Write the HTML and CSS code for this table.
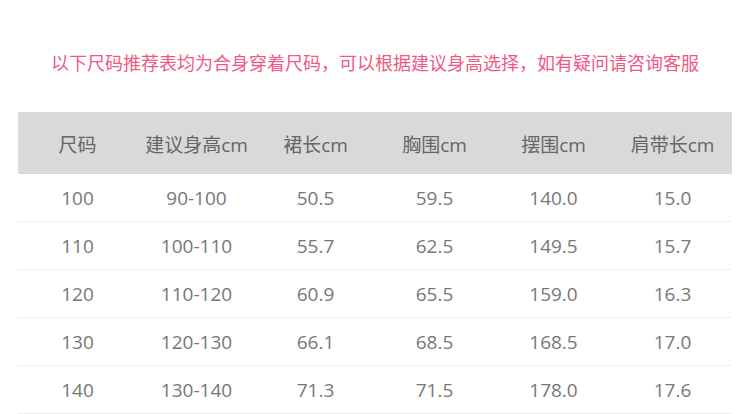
FILE: index.html
```html
<!DOCTYPE html>
<html lang="zh">
<head>
<meta charset="utf-8">
<link rel="stylesheet" href="styles.css">
</head>
<body>
<div class="page">
  <p class="note">以下尺码推荐表均为合身穿着尺码，可以根据建议身高选择，如有疑问请咨询客服</p>
  <table class="size-table">
    <thead>
      <tr><th>尺码</th><th>建议身高cm</th><th>裙长cm</th><th>胸围cm</th><th>摆围cm</th><th>肩带长cm</th></tr>
    </thead>
    <tbody>
      <tr><td>100</td><td>90-100</td><td>50.5</td><td>59.5</td><td>140.0</td><td>15.0</td></tr>
      <tr><td>110</td><td>100-110</td><td>55.7</td><td>62.5</td><td>149.5</td><td>15.7</td></tr>
      <tr><td>120</td><td>110-120</td><td>60.9</td><td>65.5</td><td>159.0</td><td>16.3</td></tr>
      <tr><td>130</td><td>120-130</td><td>66.1</td><td>68.5</td><td>168.5</td><td>17.0</td></tr>
      <tr><td>140</td><td>130-140</td><td>71.3</td><td>71.5</td><td>178.0</td><td>17.6</td></tr>
    </tbody>
  </table>
</div>
</body>
</html>
```
FILE: styles.css
```css
html, body {
  margin: 0;
  padding: 0;
  background: #fff;
}
.page {
  padding: 51px 18px 0;
  font-family: "Open Sans", "Noto Sans CJK SC", sans-serif;
}
.note {
  margin: 0;
  text-align: center;
  font-size: 18px;
  line-height: 24px;
  color: #f2587f;
}
.size-table {
  margin-top: 37px;
  width: 714px;
  border-collapse: collapse;
  table-layout: fixed;
}
.size-table th,
.size-table td {
  text-align: center;
  font-size: 19px;
  font-weight: normal;
  padding: 0;
}
.size-table th {
  background: #d9d9d9;
  color: #666;
  height: 61px;
  padding-top: 1px;
}
.size-table td {
  color: #777;
  height: 47px;
  border-bottom: 1px solid #eee;
}
```
